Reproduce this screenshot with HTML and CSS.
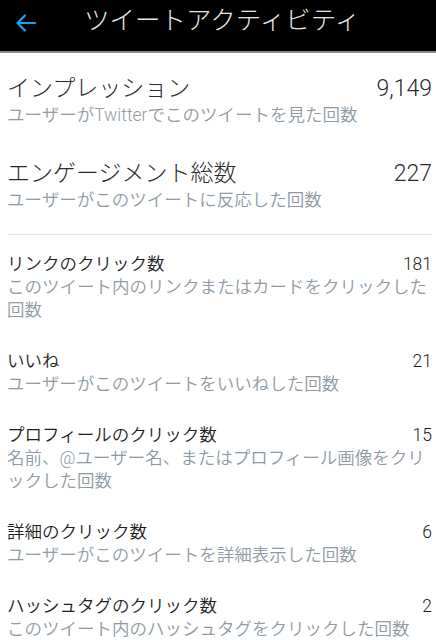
FILE: index.html
```html
<!DOCTYPE html>
<html lang="ja">
<head>
<meta charset="utf-8">
<link rel="stylesheet" href="styles.css">
</head>
<body>
<header class="bar">
  <svg class="back" width="24" height="24" viewBox="0 0 24 24"><path d="M21 12H4M11 4.5L3.5 12 11 19.5" fill="none" stroke="#1da1f2" stroke-width="2.2" stroke-linecap="round" stroke-linejoin="round"/></svg>
  <h1 class="title">ツイートアクティビティ</h1>
</header>
<main class="content">
  <section class="big">
    <div class="row big-row">
      <div class="head"><span class="name">インプレッション</span><span class="val">9,149</span></div>
      <div class="desc">ユーザーがTwitterでこのツイートを見た回数</div>
    </div>
    <div class="row big-row">
      <div class="head"><span class="name">エンゲージメント総数</span><span class="val">227</span></div>
      <div class="desc">ユーザーがこのツイートに反応した回数</div>
    </div>
  </section>
  <section class="small">
    <div class="row">
      <div class="head"><span class="name">リンクのクリック数</span><span class="val">181</span></div>
      <div class="desc">このツイート内のリンクまたはカードをクリックした回数</div>
    </div>
    <div class="row">
      <div class="head"><span class="name">いいね</span><span class="val">21</span></div>
      <div class="desc">ユーザーがこのツイートをいいねした回数</div>
    </div>
    <div class="row">
      <div class="head"><span class="name">プロフィールのクリック数</span><span class="val">15</span></div>
      <div class="desc">名前、@ユーザー名、またはプロフィール画像をクリックした回数</div>
    </div>
    <div class="row">
      <div class="head"><span class="name">詳細のクリック数</span><span class="val">6</span></div>
      <div class="desc">ユーザーがこのツイートを詳細表示した回数</div>
    </div>
    <div class="row">
      <div class="head"><span class="name">ハッシュタグのクリック数</span><span class="val">2</span></div>
      <div class="desc">このツイート内のハッシュタグをクリックした回数</div>
    </div>
  </section>
</main>
</body>
</html>
```
FILE: styles.css
```css
* { box-sizing: border-box; margin: 0; padding: 0; }
html, body { background: #fff; }
body {
  font-family: Roboto, "Noto Sans CJK JP", sans-serif;
  width: 436px;
  overflow: hidden;
}
.bar {
  height: 53px;
  background: #000;
  border-bottom: 2px solid #8c8c8c;
  display: flex;
  align-items: flex-start;
  padding: 5px 0 0 14px;
  gap: 46px;
}
.back { margin-top: 6px; flex: none; }
.title {
  font-weight: 300;
  font-size: 25.5px;
  line-height: 30px;
  color: #e6e6e6;
  letter-spacing: 0;
}
.content { padding: 0 4px 0 7px; }
.big {
  padding: 21px 0 22px;
  border-bottom: 1px solid #e1e6ea;
  display: flex;
  flex-direction: column;
  gap: 32px;
}
.head {
  display: flex;
  justify-content: space-between;
  align-items: baseline;
}
.big-row .name, .big-row .val {
  font-size: 23px;
  line-height: 30px;
  font-weight: 300;
  color: #2b2b2b;
}
.desc {
  font-size: 17.5px;
  line-height: 23px;
  font-weight: 350;
  color: #8e9ba5;
}
.small {
  padding-top: 18px;
  display: flex;
  flex-direction: column;
  gap: 28px;
}
.small .name, .small .val {
  font-size: 17.5px;
  line-height: 23px;
  font-weight: 350;
  color: #1e1e1e;
}
```
